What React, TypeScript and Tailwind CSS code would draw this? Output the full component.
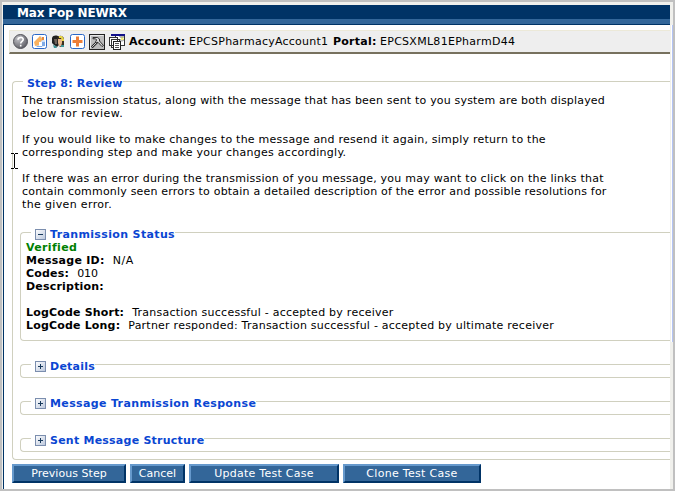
import type { ReactNode } from 'react';

function Toggle({ open }: { open: boolean }) {
  return (
    <svg width="11" height="11" viewBox="0 0 11 11" shapeRendering="crispEdges" className="mr-1 mt-px block shrink-0">
      <defs>
        <linearGradient id="tg" x1="0" y1="0" x2="1" y2="1">
          <stop offset="0" stopColor="#ffffff" />
          <stop offset="1" stopColor="#b9c6dc" />
        </linearGradient>
      </defs>
      <rect x="0.5" y="0.5" width="10" height="10" fill="url(#tg)" stroke="#7b8eae" />
      <path d={open ? 'M3 5h5v1H3z' : 'M3 5h5v1H3zM5 3h1v5H5z'} fill="#183a5c" />
    </svg>
  );
}

function Panel({ title, open, children, className }: { title: ReactNode; open: boolean; children?: ReactNode; className: string }) {
  return (
    <section className={`rounded-l-[4px] border border-r-0 border-[#d0d0bf] ${className}`}>
      <h2 className="-mt-[5px] ml-[10px] flex h-[13px] w-max bg-white pl-1 font-bold text-[#0a46d2]">
        <Toggle open={open} />
        {title}
      </h2>
      {children}
    </section>
  );
}

function Button({ children, className }: { children: ReactNode; className: string }) {
  return (
    <button
      className={`h-[19px] border-2 border-t-[#6699cc] border-r-[#003366] border-b-[#003366] border-l-[#6699cc] bg-[#336699] text-center leading-[15px] whitespace-nowrap text-white ${className}`}
    >
      {children}
    </button>
  );
}

function ToolIcons() {
  return (
    <div className="flex h-[18px] items-center">
      <svg width="116" height="18" viewBox="0 0 116 18">
        <defs>
          <radialGradient id="ball" cx="0.35" cy="0.3" r="0.8">
            <stop offset="0" stopColor="#c4c4ca" />
            <stop offset="1" stopColor="#55555c" />
          </radialGradient>
        </defs>
        <circle cx="8.5" cy="8.5" r="7" fill="url(#ball)" stroke="#55555c" />
        <path d="M6 6.700C6 3.700 11.200 3.700 11.200 6.500c0 1.800-2.500 1.900-2.500 4M8.700 11.800v1.600" fill="none" stroke="#fff" strokeWidth="1.6" />

        <rect x="20.500" y="1.500" width="14" height="14" rx="2" fill="#fff" stroke="#2a68c8" />
        <path d="M23 9l5-6 2 1 3 4v5l-3 1h-6z" fill="#cfe0f7" />
        <path d="M22 9l6-6 3 4-2 1-1 4-5 1z" fill="#f9b25f" />
        <path d="M30 4h2v3h-2z" fill="#e98a3a" />
        <path d="M27 9h3v4h-3z" fill="#fff" />
        <path d="M30 9h3v4h-3zM25 13h5v1h-5z" fill="#7fabe6" />

        <path d="M40 5c1-3 5-3 7-1l1 7-3 3-3-2-2-2z" fill="#222" />
        <path d="M42 6h3v5h-2z" fill="#6f625b" />
        <path d="M45 5c2-4 7-2 7 1v6l-4 2-2-3z" fill="#3c3020" />
        <path d="M46 6h4v4l-1 3h-2l-1-3z" fill="#e8b88f" />
        <path d="M47 3h3l2 3v2h-2l-1-3h-2z" fill="#e7d547" />
        <path d="M41 12l3 1 1 2h-3zM49 12h3v2h-3z" fill="#3e9598" />

        <rect x="58.500" y="1.500" width="14" height="14" rx="2" fill="#fff" stroke="#2a68c8" />
        <path d="M64 3.500h3v3.500h3.500v3H67v3.500h-3V10h-3.500V7H64z" fill="#ee7f38" />

        <rect x="77.500" y="1.500" width="15" height="15" fill="#bcbcbc" stroke="#222" />
        <path d="M78.500 15.500v-13h13" fill="none" stroke="#e8e8e8" />
        <path d="M79.800 14.300l5.500-5.500" stroke="#222" strokeWidth="2.400" />
        <path d="M80.200 13.900l5-5" stroke="#eee" strokeWidth="0.9" />
        <path d="M81 4.500h4.500l2 1.500v2l4 4.500-1.500 1-4-4.200-1.500.2-.8-1.200 1-1.300-1.200-1.200H81z" fill="#dcdcdc" stroke="#222" strokeWidth="0.9" />

        <g shapeRendering="crispEdges">
          <path d="M103.500 1.500h9v11h-9z" fill="#fff" stroke="#333" />
          <path d="M99 1h14v2H99z" fill="#10108c" />
          <path d="M97.500 4.500h8v8h-8zM99.500 6.500h8v8h-8z" fill="#fff" stroke="#333" />
          <path d="M101.500 8.500h7v8h-7z" fill="#fff" stroke="#222" />
          <path d="M103 10.500h4M103 12.500h4M103 14.500h4" stroke="#555" />
        </g>
        <path d="M107.500 3l5 5M112.500 3l-5 5M110 2.500v6" stroke="#444" strokeWidth="0.8" />
        <path d="M109 4.500h2.500v2.500H109z" fill="#f1ef74" />
      </svg>
    </div>
  );
}

export default function App() {
  return (
    <div className="h-[491px] w-[675px] overflow-hidden border-2 border-[#c0c0c0] bg-[#f0f0ec] pt-[3px] font-['DejaVu_Sans',Verdana,sans-serif] text-[11px] leading-[13px] text-black">
      <div className="flex h-[484px]">
        <main className="ml-px w-[667px] shrink-0 border-l border-[#003366] bg-white">
          <header className="-ml-px h-[20px] border-b border-[#003366] bg-[#336699]">
            <h1 className="h-[14px] bg-[#003366] pl-[14px] text-[12px] leading-[14px] font-bold tracking-[-0.15px] whitespace-nowrap text-white">
              <span className="relative top-px">Max Pop NEWRX</span>
            </h1>
          </header>

          <div className="mt-[5px] ml-[5px] flex h-[24px] items-center border-t border-b-2 border-l border-t-[#ece9d8] border-b-[#77715e] border-l-[#ece9d8] bg-[#eeeeee] pl-[2px] whitespace-nowrap">
            <ToolIcons />
            <b className="ml-[1px] w-[60px] tracking-[0.25px]">Account:</b>
            <span className="w-[144px] tracking-[0.25px]">EPCSPharmacyAccount1</span>
            <b className="w-[47px] tracking-[0.25px]">Portal:</b>
            <span className="tracking-[0.28px]">EPCSXML81EPharmD44</span>
          </div>

          <section className="mt-[27px] ml-[8px] h-[379px] rounded-l-[4px] border border-r-0 border-[#d0d0bf] whitespace-nowrap">
            <h2 className="-mt-[5px] ml-[10px] h-[13px] w-max bg-white pl-1 font-bold tracking-[0.2px] text-[#0a46d2]">Step 8: Review</h2>
            <div className="mt-1 ml-[9px] flex flex-col gap-[13px]">
              <p>
                <span className="tracking-[0.182px]">The transmission status, along with the message that has been sent to you system are both displayed</span>
                <br />
                <span className="tracking-[0.45px]">below for review.</span>
              </p>
              <p>
                <span className="tracking-[0.235px]">If you would like to make changes to the message and resend it again, simply return to the</span>
                <br />
                <span className="tracking-[0.26px]">corresponding step and make your changes accordingly.</span>
              </p>
              <p>
                <span className="tracking-[0.235px]">If there was an error during the transmission of you message, you may want to click on the links that</span>
                <br />
                <span className="tracking-[0.197px]">contain commonly seen errors to obtain a detailed description of the error and possible resolutions for</span>
                <br />
                <span className="tracking-[0.35px]">the given error.</span>
              </p>
            </div>

            <div className="mt-[21px] ml-[7px] flex flex-col gap-[23px]">
              <Panel title={<span className="tracking-[0.36px]">Tranmission Status</span>} open className="h-[109px]">
                <div className="ml-[5px]">
                  <p className="font-bold tracking-[0.35px] text-[#008000]">Verified</p>
                  <p><b className="mr-2 tracking-[0.27px]">Message ID:</b><span className="tracking-[0.6px]">N/A</span></p>
                  <p><b className="mr-2 tracking-[0.2px]">Codes:</b>010</p>
                  <p className="mb-[13px] tracking-[0.2px]"><b>Description:</b></p>
                  <p><b className="mr-2 tracking-[0.18px]">LogCode Short:</b><span className="tracking-[0.25px]">Transaction successful - accepted by receiver</span></p>
                  <p><b className="mr-2 tracking-[0.18px]">LogCode Long:</b><span className="tracking-[0.236px]">Partner responded: Transaction successful - accepted by ultimate receiver</span></p>
                </div>
              </Panel>
              <Panel title={<span className="tracking-[0.25px]">Details</span>} open={false} className="h-[14px]" />
              <Panel title={<span className="tracking-[0.36px]">Message Tranmission Response</span>} open={false} className="h-[14px]" />
              <Panel title={<span className="tracking-[0.23px]">Sent Message Structure</span>} open={false} className="h-[14px]" />
            </div>
          </section>

          <div className="mt-1 ml-[8px] flex gap-1">
            <Button className="w-[114px] tracking-[0.05px]">Previous Step</Button>
            <Button className="w-[55px]">Cancel</Button>
            <Button className="w-[150px] tracking-[0.25px]">Update Test Case</Button>
            <Button className="w-[138px] tracking-[0.3px]">Clone Test Case</Button>
          </div>
        </main>
        <div className="mt-[20px] ml-px h-[317px] w-[2px] shrink-0 border-r border-[#b4c4f4] bg-white" />
      </div>
      <svg className="absolute top-[153px] left-[11px]" width="7" height="16" viewBox="0 0 7 16" shapeRendering="crispEdges">
        <path d="M0 0h3v1h1V0h3v1H4v14h3v1H4v-1H3v1H0v-1h3V1H0z" fill="#000" />
      </svg>
    </div>
  );
}
